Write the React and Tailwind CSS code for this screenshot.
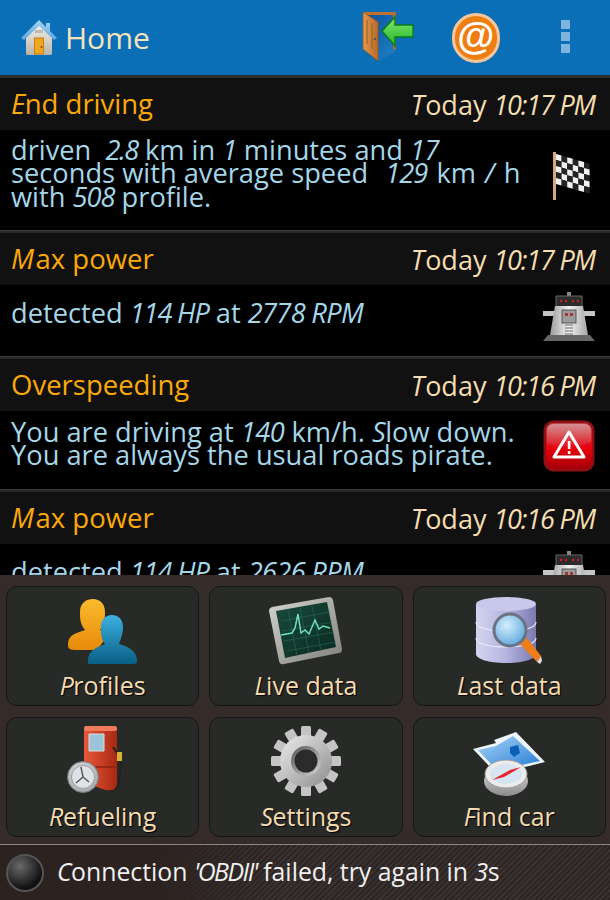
import React from "react";

const font = { fontFamily: '"Open Sans","Noto Sans",sans-serif' };

function L({ children, t = "tracking-[-0.5px]" }) {
  return <span className={`italic font-normal ${t}`}>{children}</span>;
}

function HomeIcon() {
  return (
    <svg width="38" height="40" viewBox="0 0 38 40">
      <defs>
        <linearGradient id="hw" x1="0" y1="0" x2="0" y2="1"><stop offset="0" stopColor="#f4f1e8"/><stop offset="1" stopColor="#b9b4aa"/></linearGradient>
        <linearGradient id="hr" x1="0" y1="0" x2="0" y2="1"><stop offset="0" stopColor="#a4d4f2"/><stop offset="1" stopColor="#5fa6dc"/></linearGradient>
      </defs>
      <path d="M6 19 L19 7 L32 19 V36 Q32 37 30 37 H8 Q6 37 6 36Z" fill="url(#hw)"/>
      <path d="M1 20 L19 2 L26 9 V5 H30 V13 L37 20 L34 22 L19 8 L4 22Z" fill="url(#hr)"/>
      <rect x="14.5" y="20" width="9" height="16" fill="#f1a81e" stroke="#c77d14"/>
      <rect x="15" y="12" width="8" height="3" fill="#bdbab2"/>
      <circle cx="21.5" cy="29" r="1" fill="#7a4a10"/>
    </svg>
  );
}

function DoorIcon() {
  return (
    <svg width="52" height="52" viewBox="0 0 52 52">
      <defs>
        <linearGradient id="dr" x1="0" y1="0" x2="1" y2="0"><stop offset="0" stopColor="#e09a50"/><stop offset="1" stopColor="#b86a28"/></linearGradient>
        <linearGradient id="ar" x1="0" y1="0" x2="0" y2="1"><stop offset="0" stopColor="#7de86a"/><stop offset="1" stopColor="#25b52a"/></linearGradient>
        <linearGradient id="op" x1="0" y1="0" x2="1" y2="1"><stop offset="0" stopColor="#0b4f96"/><stop offset="1" stopColor="#1f82c8"/></linearGradient>
      </defs>
      <path d="M1 1 H34 V40 L17 50 Z" fill="url(#op)"/>
      <path d="M1 1 H34 V4 H4 Z" fill="#bf7230"/>
      <path d="M31 1 H34 V38 H31Z" fill="#b5692a"/>
      <path d="M1 1 L16 11 V50 L1 38 Z" fill="url(#dr)" stroke="#9c5720" strokeWidth="0.8"/>
      <path d="M5 9 V33 M10 12 V38" stroke="#a05c22" strokeWidth="1"/>
      <circle cx="13" cy="28" r="1.2" fill="#555"/>
      <path d="M20 20 L33 6 V14 H51 V26 H33 V35 Z" fill="url(#ar)" stroke="#0b7a1c" strokeWidth="1.4"/>
    </svg>
  );
}

function AtIcon() {
  return (
    <div className="flex h-[50px] w-[48px] items-center justify-center rounded-full border-[3px] border-[#f6c79a] bg-[#ee7d12]">
      <span className="text-[38px] leading-none font-bold text-white" style={{ fontFamily: '"Liberation Sans",sans-serif', marginTop: -3 }}>@</span>
    </div>
  );
}

function Flag() {
  const cells = [];
  for (let r = 0; r < 5; r++) for (let c = 0; c < 6; c++) {
    cells.push(
      <path key={`${r}-${c}`} d={`M${4 + c * 5.6} ${3 + r * 6 + c * 1.6} l5.6 1.6 v6 l-5.6 -1.6 z`} fill={(r + c) % 2 === 0 ? "#f2f2f2" : "#242424"} />
    );
  }
  return (
    <svg width="38" height="50" viewBox="0 0 38 50">
      <rect x="1" y="1" width="3" height="48" fill="#d5a77c"/>
      {cells}
    </svg>
  );
}

function Robot({ id }) {
  return (
    <svg width="52" height="50" viewBox="0 0 52 50">
      <defs>
        <linearGradient id={id} x1="0" y1="0" x2="1" y2="0"><stop offset="0" stopColor="#9a9a9a"/><stop offset="0.5" stopColor="#f2f2f2"/><stop offset="1" stopColor="#a5a5a5"/></linearGradient>
      </defs>
      <rect x="24" y="0" width="4" height="10" fill="#8a8a8a"/>
      <path d="M13 4 H39 V15 H13Z" fill="#2c2c2c" stroke="#666"/>
      <circle cx="18" cy="9" r="1.2" fill="#c22"/><circle cx="23" cy="9" r="1.2" fill="#c22"/><circle cx="30" cy="9" r="1.2" fill="#c22"/><circle cx="35" cy="9" r="1.2" fill="#c22"/>
      <rect x="0" y="19" width="52" height="5" fill="#c5c5c5"/>
      <path d="M12 14 H40 L45 43 H7Z" fill={`url(#${id})`}/>
      <rect x="19" y="18" width="14" height="13" fill="#9b9b9b" stroke="#555"/>
      <rect x="22" y="21" width="3" height="3" fill="#a33"/><rect x="27" y="21" width="3" height="3" fill="#a33"/>
      <path d="M22 33 H30 M22 36 H30 M22 39 H30 M22 42 H30" stroke="#666"/>
      <path d="M5 43 H47 L52 49 H0Z" fill="#666"/>
    </svg>
  );
}

function WarnIcon() {
  return (
    <svg width="52" height="52" viewBox="0 0 52 52">
      <defs>
        <linearGradient id="wb" x1="0" y1="0" x2="0" y2="1"><stop offset="0" stopColor="#b8484c"/><stop offset="0.55" stopColor="#e8000c"/><stop offset="1" stopColor="#a20008"/></linearGradient>
        <linearGradient id="wg" x1="0" y1="0" x2="0" y2="1"><stop offset="0" stopColor="#fff" stopOpacity="0.6"/><stop offset="1" stopColor="#fff" stopOpacity="0.05"/></linearGradient>
      </defs>
      <rect x="0.5" y="0.5" width="51" height="51" rx="10" fill="#8f1014"/>
      <rect x="3" y="3" width="46" height="46" rx="8" fill="url(#wb)"/>
      <path d="M4 11 Q4 4 11 4 H41 Q48 4 48 11 V22 Q26 32 4 24Z" fill="url(#wg)" opacity="0.65"/>
      <path d="M26 12 L41 37 H11Z" fill="none" stroke="#fff" strokeWidth="3" strokeLinejoin="round"/>
      <rect x="24.8" y="21" width="2.6" height="8" fill="#fff"/>
      <rect x="24.8" y="31" width="2.6" height="3" fill="#fff"/>
    </svg>
  );
}

function ProfilesIcon() {
  return (
    <svg width="72" height="68" viewBox="0 0 72 68">
      <defs>
        <linearGradient id="po" x1="0" y1="0" x2="0" y2="1"><stop offset="0" stopColor="#fbbb2c"/><stop offset="1" stopColor="#e88a0a"/></linearGradient>
        <linearGradient id="pb" x1="0" y1="0" x2="0" y2="1"><stop offset="0" stopColor="#3cb0e0"/><stop offset="1" stopColor="#0a5f85"/></linearGradient>
      </defs>
      <path d="M1 48 C1 36 8 36 18 32 C13 26 13 20 13 14 C13 5 19 1 26 1 C33 1 38 6 38 14 C38 24 36 27 33 32 L42 36 L30 52 L8 52 Q1 52 1 48Z" fill="url(#po)"/>
      <path d="M21 66 C20 56 24 51 38 46 C34 41 34 35 34 29 C34 22 38 17 45 17 C52 17 56 22 56 29 C56 35 54 41 52 46 C66 50 70 56 70 63 Q70 66 66 66Z" fill="url(#pb)"/>
    </svg>
  );
}

function MonitorIcon() {
  return (
    <svg width="76" height="70" viewBox="0 0 76 70">
      <defs>
        <linearGradient id="ms" x1="0" y1="0" x2="1" y2="1"><stop offset="0" stopColor="#1a4a3c"/><stop offset="1" stopColor="#0a2a22"/></linearGradient>
        <linearGradient id="mf" x1="0" y1="0" x2="1" y2="1"><stop offset="0" stopColor="#d5d5d0"/><stop offset="1" stopColor="#7f7f7a"/></linearGradient>
      </defs>
      <path d="M4 11 L61 1 Q64 1 65 4 L74 53 Q74 57 71 57 L16 68 Q12 69 11 65 L1 15 Q1 12 4 11Z" fill="url(#mf)"/>
      <path d="M8 15 L59 6 L68 51 L17 62Z" fill="url(#ms)"/>
      <path d="M13 25 L62 16 M14 35 L64 26 M16 45 L66 36 M19 55 L68 46 M20 14 L29 60 M32 12 L41 57 M44 10 L53 55" stroke="#2a6a58" strokeWidth="0.6"/>
      <path d="M13 39 L24 37 L27 32 L30 18 L33 37 L37 34 L41 38 L47 24 L51 33 L55 30 L62 32" fill="none" stroke="#6ee0c0" strokeWidth="1.5"/>
    </svg>
  );
}

function DbIcon() {
  return (
    <svg width="68" height="70" viewBox="0 0 68 70">
      <defs>
        <linearGradient id="db" x1="0" y1="0" x2="1" y2="0"><stop offset="0" stopColor="#d4d4f0"/><stop offset="0.5" stopColor="#b4b4e0"/><stop offset="1" stopColor="#7a7ab0"/></linearGradient>
        <radialGradient id="lens" cx="0.4" cy="0.35" r="0.7"><stop offset="0" stopColor="#d4eefc"/><stop offset="1" stopColor="#5ba6dc"/></radialGradient>
      </defs>
      <path d="M1 8 V58 C1 63 14 67 31 67 C48 67 61 63 61 58 V8Z" fill="url(#db)"/>
      <ellipse cx="31" cy="8" rx="30" ry="7" fill="#c8c8ea"/>
      <path d="M1 26 C1 32 14 35 31 35 C48 35 61 32 61 26 M1 42 C1 48 14 51 31 51 C48 51 61 48 61 42" fill="none" stroke="#e8e8f8" strokeWidth="1.2"/>
      <path d="M45 48 L52 42 L66 60 L62 66 Z" fill="#ef7d1a"/>
      <path d="M62 66 L66 60 L67 65 L65 68Z" fill="#ddd"/>
      <circle cx="35" cy="34" r="16" fill="url(#lens)" stroke="#6b7280" strokeWidth="3"/>
    </svg>
  );
}

function PumpIcon() {
  return (
    <svg width="72" height="72" viewBox="0 0 72 72">
      <defs>
        <linearGradient id="pp" x1="0" y1="0" x2="1" y2="0"><stop offset="0" stopColor="#e8583a"/><stop offset="1" stopColor="#a82812"/></linearGradient>
        <radialGradient id="cl" cx="0.45" cy="0.4" r="0.65"><stop offset="0" stopColor="#f2f4f6"/><stop offset="1" stopColor="#9aa0a6"/></radialGradient>
      </defs>
      <path d="M17 6 Q17 1 22 1 L46 2 Q50 3 50 7 V64 Q44 68 30 62 L17 58Z" fill="url(#pp)"/>
      <rect x="17" y="1" width="33" height="5" rx="2" fill="#f07a5a"/>
      <path d="M22 9 H37 V26 H22Z" fill="#9cc4d8" stroke="#ddd"/>
      <path d="M20 42 H50" stroke="#8e2010" strokeWidth="1.5"/>
      <path d="M46 22 L54 34 L52 58 Q48 68 42 66" fill="none" stroke="#222" strokeWidth="2"/>
      <rect x="50" y="27" width="5" height="9" fill="#d8b030"/>
      <circle cx="16" cy="52" r="15.5" fill="url(#cl)" stroke="#777"/>
      <circle cx="16" cy="52" r="11.5" fill="#dfe3e8" stroke="#999"/>
      <path d="M16 52 L14 42 M16 52 L22 57 M16 52 L9 58" stroke="#555" strokeWidth="1.4"/>
    </svg>
  );
}

function GearIcon() {
  const teeth = [];
  for (let i = 0; i < 12; i++) {
    teeth.push(<rect key={i} x="31" y="1" width="10" height="14" rx="1.5" fill="#c4c4c4" transform={`rotate(${i * 30} 36 36)`} />);
  }
  return (
    <svg width="72" height="72" viewBox="0 0 72 72">
      <defs>
        <linearGradient id="gg" x1="0" y1="0" x2="1" y2="1"><stop offset="0" stopColor="#ececec"/><stop offset="1" stopColor="#8c8c8c"/></linearGradient>
        <linearGradient id="gh" x1="0" y1="0" x2="1" y2="1"><stop offset="0" stopColor="#555"/><stop offset="1" stopColor="#d5d5d5"/></linearGradient>
      </defs>
      {teeth}
      <circle cx="36" cy="36" r="26" fill="url(#gg)"/>
      <circle cx="36" cy="36" r="15" fill="url(#gh)"/>
      <circle cx="36" cy="36" r="11.5" fill="#2a2c2a"/>
    </svg>
  );
}

function MapIcon() {
  return (
    <svg width="74" height="66" viewBox="0 0 74 66">
      <defs>
        <linearGradient id="mp" x1="0" y1="0" x2="1" y2="1"><stop offset="0" stopColor="#a8d4f4"/><stop offset="1" stopColor="#2a80d8"/></linearGradient>
        <linearGradient id="cp" x1="0" y1="0" x2="0" y2="1"><stop offset="0" stopColor="#e4e4e4"/><stop offset="1" stopColor="#8a8a8a"/></linearGradient>
      </defs>
      <path d="M1 18 L24 12 L22 9 L44 1 L73 31 L53 36 L33 38 L18 36Z" fill="#eef4fb"/>
      <path d="M6 19 L24 15 L41 5 L68 30 L40 36 L20 34Z" fill="url(#mp)"/>
      <path d="M38 16 L46 14 L48 22 L42 26 L38 22Z" fill="#0b5fb4"/>
      <ellipse cx="34" cy="50" rx="22" ry="15" fill="url(#cp)"/>
      <ellipse cx="34" cy="43" rx="21" ry="14" fill="#ececec" stroke="#999"/>
      <ellipse cx="34" cy="43" rx="16" ry="10" fill="#d7e4f2"/>
      <path d="M20 49 L38 39 L49 36 L32 46Z" fill="#e8242c"/>
    </svg>
  );
}

function Row({ title, time, h, icon, children }) {
  return (
    <div>
      <div className="flex h-[52px] items-center justify-between bg-[#111111] pl-[11px] pr-[15px]">
        <span className="text-[27.5px] leading-none text-[#fba90a]">{title}</span>
        <span className="text-[27px] leading-none text-[#f6deb0]">{time}</span>
      </div>
      <div className="flex items-start justify-between bg-black pl-[11px] pr-[15px]" style={{ height: h }}>
        <div className="pt-[8px] text-[27.25px] leading-[23.3px] text-[#a5d6e8]">{children}</div>
        {icon}
      </div>
      <div className="h-[3px] border-t border-[#403c38] bg-[#2a2826]" />
    </div>
  );
}

function Tile({ icon, label }) {
  return (
    <div className="flex h-[120px] flex-col items-center justify-end rounded-[11px] border border-[#151615] bg-[#282a28] pb-[4px]">
      <div className="flex flex-1 items-end justify-center">{icon}</div>
      <span className="mt-[3px] text-[25px] leading-[32px] text-[#f4dcb0] [text-shadow:1px_1px_1px_#000]">{label}</span>
    </div>
  );
}

const Time = ({ v }) => (
  <>
    <L t="tracking-[1px]">T</L>oday <L t="tracking-[-1.2px]">{v}</L>
  </>
);

export default function App() {
  return (
    <div className="flex h-[900px] w-[610px] flex-col overflow-hidden bg-black" style={font}>
      <header className="flex h-[78px] shrink-0 items-center border-b-[3px] border-[#302f2e] bg-[#0a6fb6]">
        <div className="ml-[20px]"><HomeIcon /></div>
        <span className="ml-[7px] text-[30px] leading-none text-[#f7e3bb]">Home</span>
        <div className="ml-[212px] mt-[-1px]"><DoorIcon /></div>
        <div className="ml-[38px]"><AtIcon /></div>
        <div className="ml-[61px] mt-[-2px] flex flex-col gap-[3px]">
          <div className="h-[9px] w-[9px] bg-[#7fb5dc]" />
          <div className="h-[9px] w-[9px] bg-[#7fb5dc]" />
          <div className="h-[9px] w-[9px] bg-[#7fb5dc]" />
        </div>
      </header>

      <main className="h-[497px] shrink-0 overflow-hidden">
        <Row title={<><L>E</L>nd driving</>} time={<Time v="10:17 PM" />} h={100} icon={<div className="mt-[21px] mr-[5px]"><Flag /></div>}>
          driven&nbsp; <L t="tracking-[-1.5px]">2.8</L> km in <L>1</L> minutes and <L>17</L><br />
          seconds with average speed&nbsp; <L t="ml-[3px] tracking-[-1px]">129</L> <span className="ml-[2px]">km</span> <L t="ml-[2px]">/</L> <span className="ml-[2px]">h</span><br />
          with <L t="tracking-[-1px]">508</L> profile.
        </Row>
        <Row title={<><L t="tracking-[1.5px]">M</L>ax power</>} time={<Time v="10:17 PM" />} h={71} icon={<div className="mt-[7px]"><Robot id="r1" /></div>}>
          <div className="pt-[8px]">detected <L t="tracking-[-1.2px]">114 HP</L> at <L t="tracking-[-0.7px]">2778 RPM</L></div>
        </Row>
        <Row title="Overspeeding" time={<Time v="10:16 PM" />} h={78} icon={<div className="mt-[9px]"><WarnIcon /></div>}>
          <div className="pt-[1px]">
            You are driving at <L>140</L> km/h. <L>S</L>low down.<br />
            You are always the usual roads pirate.
          </div>
        </Row>
        <Row title={<><L t="tracking-[1.5px]">M</L>ax power</>} time={<Time v="10:16 PM" />} h={70} icon={<div className="mt-[7px]"><Robot id="r2" /></div>}>
          <div className="pt-[8px]">detected <L t="tracking-[-1.2px]">114 HP</L> at <L t="tracking-[-0.7px]">2626 RPM</L></div>
        </Row>
      </main>

      <section className="flex-1 bg-[#352c29]">
        <div className="grid h-[270px] grid-cols-3 content-start gap-x-[10px] gap-y-[11px] border-b border-[#8a8784] pl-[6px] pr-[4px] pt-[11px]">
          <Tile icon={<ProfilesIcon />} label={<><L>P</L>rofiles</>} />
          <Tile icon={<MonitorIcon />} label={<><L>L</L>ive data</>} />
          <Tile icon={<DbIcon />} label={<><L>L</L>ast data</>} />
          <Tile icon={<PumpIcon />} label={<><L>R</L>efueling</>} />
          <Tile icon={<GearIcon />} label={<><L>S</L>ettings</>} />
          <Tile icon={<MapIcon />} label={<><L>F</L>ind car</>} />
        </div>
        <div className="flex h-[55px] items-center pb-[3px] [background:linear-gradient(to_right,#2c2321_25%,transparent_45%),repeating-linear-gradient(135deg,#2c2523_0px,#2c2523_2px,#3a3230_2px,#3a3230_4px)]">
          <div className="ml-[6px] mt-[3px] flex h-[38px] w-[38px] items-center justify-center rounded-full border-2 border-[#555] bg-[radial-gradient(circle_at_35%_30%,#6a6a6a,#111_70%)]" />
          <span className="ml-[13px] text-[24.8px] leading-none whitespace-nowrap text-[#f0f0f0]">
            <L>C</L>onnection <L t="tracking-[-1.5px]">'OBDII'</L> failed, try again in <L>3</L>s
          </span>
        </div>
      </section>
    </div>
  );
}
